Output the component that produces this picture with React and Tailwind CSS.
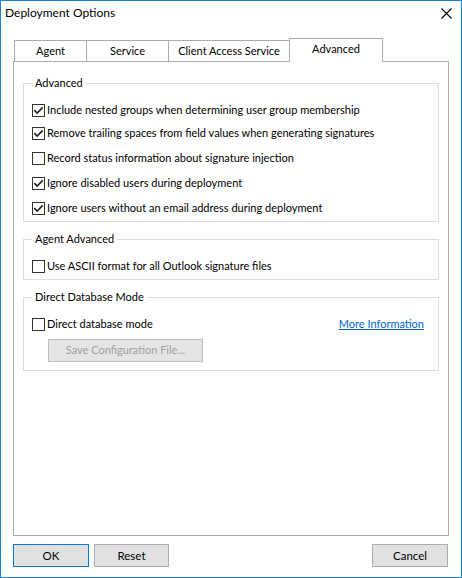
import React from 'react';

const FONT = "font-['Lato',sans-serif]";

function Check({ checked }) {
  return (
    <span className="w-[13px] h-[13px] border border-[#333333] bg-white flex items-center justify-center shrink-0">
      {checked && (
        <svg width="11" height="11" viewBox="0 0 11 11">
          <path d="M1.3 5.2 L4.2 8.1 L9.7 2.4" fill="none" stroke="#222222" strokeWidth="1.7" />
        </svg>
      )}
    </span>
  );
}

function Row({ checked, label, className = '' }) {
  return (
    <div className={`flex items-center h-[16px] gap-[2px] ${className}`}>
      <Check checked={checked} />
      <span className="leading-[16px] whitespace-nowrap">{label}</span>
    </div>
  );
}

function Group({ title, className = '', children }) {
  return (
    <fieldset className={`border border-[#dcdcdc] mx-[9px] pl-[8px] ${className}`}>
      <legend className="ml-[0px] px-[3px] leading-[16px]">{title}</legend>
      {children}
    </fieldset>
  );
}

function Button({ children, className = '' }) {
  return (
    <button className={`h-[23px] bg-[#e1e1e1] border text-[11.5px] text-[#000] ${className}`}>
      {children}
    </button>
  );
}

export default function App() {
  const advanced = [
    { checked: true, label: 'Include nested groups when determining user group membership', mt: 'mt-[11px]' },
    { checked: true, label: 'Remove trailing spaces from field values when generating signatures', mt: 'mt-[7px]' },
    { checked: false, label: 'Record status information about signature injection', mt: 'mt-[9px]' },
    { checked: true, label: 'Ignore disabled users during deployment', mt: 'mt-[9px]' },
    { checked: true, label: 'Ignore users without an email address during deployment', mt: 'mt-[9px]' },
  ];

  return (
    <div className={`w-[462px] h-[578px] border border-[#1883d7] bg-white flex flex-col text-[11px] text-[#000] ${FONT}`}>
      {/* title bar */}
      <div className="h-[24px] flex items-center justify-between pl-[4px] pr-[9px]">
        <span className="text-[12px]">Deployment Options</span>
        <svg width="11" height="11" viewBox="0 0 11 11">
          <path d="M0.5 0.5 L10.5 10.5 M10.5 0.5 L0.5 10.5" stroke="#000" strokeWidth="1.1" />
        </svg>
      </div>

      {/* tabs */}
      <div className="mt-[13px] mx-[12px]">
        <div className="flex items-end h-[23px] ml-[1px]">
          <div className="w-[72px] h-[21px] border-l border-t border-[#acacac] flex items-center justify-center">Agent</div>
          <div className="w-[82px] h-[21px] border-l border-t border-[#acacac] flex items-center justify-center">Service</div>
          <div className="w-[121px] h-[21px] border-l border-t border-[#acacac] flex items-center justify-center">Client Access Service</div>
          <div className="relative z-10 w-[94px] h-[24px] -mb-[1px] border-l border-t border-r border-[#acacac] bg-white flex items-center justify-center pb-[2px]">Advanced</div>
        </div>

        <div className="h-[475px] w-[436px] border border-[#acacac] flex flex-col">
          <Group title="Advanced" className="mt-[13px] pb-[5px]">
            {advanced.map((a) => (
              <Row key={a.label} checked={a.checked} label={a.label} className={a.mt} />
            ))}
          </Group>

          <Group title="Agent Advanced" className="mt-[9px] pb-[5px]">
            <Row checked={false} label="Use ASCII format for all Outlook signature files" className="mt-[11px]" />
          </Group>

          <Group title="Direct Database Mode" className="mt-[9px] pb-[8px]">
            <div className="flex items-center justify-between mt-[11px] pr-[14px]">
              <Row checked={false} label="Direct database mode" />
              <a className="text-[#0066cc] underline leading-[16px] cursor-pointer">More Information</a>
            </div>
            <button
              disabled
              className="mt-[7px] ml-[16px] w-[155px] h-[23px] bg-[#e5e5e5] border border-[#bfbfbf] text-[#a0a0a0] text-[11px]"
            >
              Save Configuration File...
            </button>
          </Group>
        </div>
      </div>

      {/* bottom buttons */}
      <div className="mt-[8px] flex items-center pl-[12px] pr-[13px]">
        <Button className="w-[76px] border-[#0078d7]">OK</Button>
        <Button className="w-[75px] ml-[5px] border-[#adadad]">Reset</Button>
        <Button className="w-[76px] ml-auto border-[#adadad]">Cancel</Button>
      </div>
    </div>
  );
}
